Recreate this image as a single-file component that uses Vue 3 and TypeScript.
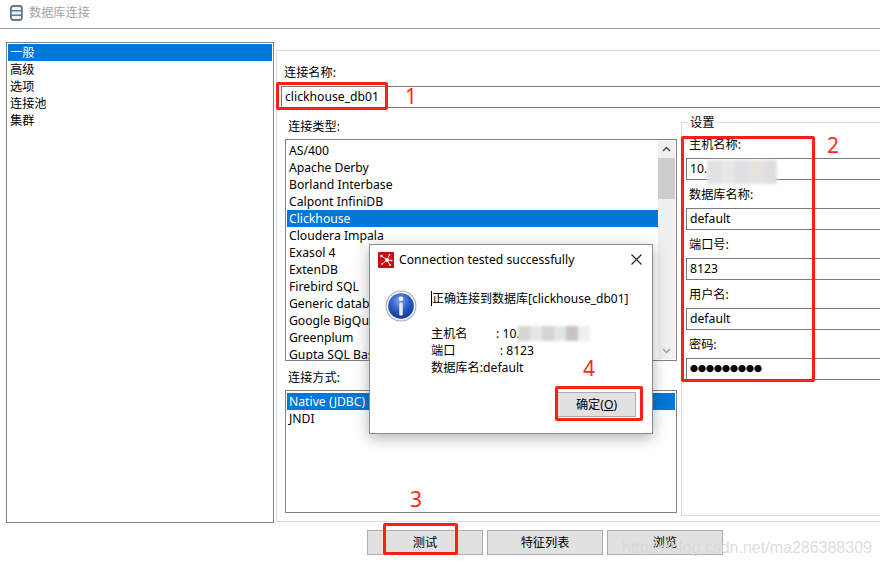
<script setup lang="ts">
const navItems = ['一般', '高级', '选项', '连接池', '集群']
const dbTypes = [
  'AS/400',
  'Apache Derby',
  'Borland Interbase',
  'Calpont InfiniDB',
  'Clickhouse',
  'Cloudera Impala',
  'Exasol 4',
  'ExtenDB',
  'Firebird SQL',
  'Generic database',
  'Google BigQuery',
  'Greenplum',
  'Gupta SQL Base',
]
const methods = ['Native (JDBC)', 'JNDI']
const fields = [
  { label: '主机名称:', value: '10.', blur: true },
  { label: '数据库名称:', value: 'default' },
  { label: '端口号:', value: '8123' },
  { label: '用户名:', value: 'default' },
  { label: '密码:', value: '●●●●●●●●●', secret: true },
]
const buttons = ['测试', '特征列表', '浏览']
const notes = [
  { n: '1', cls: 'n1' },
  { n: '2', cls: 'n2' },
  { n: '3', cls: 'n3' },
  { n: '4', cls: 'n4' },
]
const boxes = ['b1', 'b2', 'b3', 'b4']
const mosaic = ['#dfe2e3', '#e6e6e6', '#dde1e2', '#e6e3df', '#dcdfe1']
const mosaic2 = ['#d8d4d0', '#e4e6e8', '#d6d3ce', '#e2e5e7', '#c8c3bf', '#f0f0f0']
// runs of spaces line the colons up, as the dialog text does
const hostLine = '主机名         : 10.'
const portLine = '端口              : 8123'
</script>

<template>
  <div class="page">
    <header class="titlebar">
      <svg class="db-icon" width="14" height="16" viewBox="0 0 14 16">
        <rect x="1.9" y="1" width="11" height="14" rx="2.5" fill="#f4f7f9" stroke="#5b7a92" stroke-width="1.8" />
        <path d="M2 5.7h11M2 10.3h11" stroke="#5b7a92" stroke-width="1.4" fill="none" />
      </svg>
      <span class="title">数据库连接</span>
    </header>

    <main class="content">
      <ul class="nav">
        <li v-for="(item, i) in navItems" :key="item" :class="{ sel: i === 0 }">{{ item }}</li>
      </ul>

      <div class="right">
        <section class="panel">
          <label class="name-label">连接名称:</label>
          <div class="input name-input">clickhouse_db01</div>

          <div class="lower">
            <div class="lists">
              <label class="list-label">连接类型:</label>
              <div class="list types">
                <ul class="rows">
                  <li v-for="t in dbTypes" :key="t" :class="{ sel: t === 'Clickhouse' }">{{ t }}</li>
                </ul>
                <div class="scrollbar">
                  <svg width="17" height="17" viewBox="0 0 17 17"><path d="M5 10l3.5-3.5L12 10" fill="none" stroke="#505050" stroke-width="1.5" /></svg>
                  <div class="track"><div class="thumb"></div></div>
                  <svg width="17" height="17" viewBox="0 0 17 17"><path d="M5 7l3.5 3.5L12 7" fill="none" stroke="#a0a0a0" stroke-width="1.5" /></svg>
                </div>
              </div>
              <label class="list-label method-label">连接方式:</label>
              <div class="list methods">
                <ul class="rows">
                  <li v-for="m in methods" :key="m" :class="{ sel: m === methods[0] }">{{ m }}</li>
                </ul>
              </div>
            </div>

            <fieldset class="settings">
              <legend>设置</legend>
              <div v-for="f in fields" :key="f.label" class="field">
                <label>{{ f.label }}</label>
                <div class="input" :class="{ secret: f.secret }">
                  {{ f.value }}
                  <span v-if="f.blur" class="smudge">
                    <i v-for="c in mosaic" :key="c" :style="{ background: c }"></i>
                  </span>
                </div>
              </div>
            </fieldset>
          </div>
        </section>

        <div class="actions">
          <button v-for="b in buttons" :key="b" class="btn">{{ b }}</button>
        </div>
      </div>
    </main>

    <div class="dialog">
      <div class="dlg-title">
        <svg width="16" height="16" viewBox="0 0 16 16">
          <rect width="16" height="16" rx="1" fill="#cc0a10" />
          <path d="M3.5 4L9 8M11.5 2.8L9 8M13.5 8.5L9 8M4 12L9 8M12 13L9 8" stroke="#fff" stroke-width="0.9" />
          <circle cx="9" cy="8" r="1.9" fill="#fff" />
          <circle cx="3.5" cy="4" r="1.3" fill="#fff" />
          <circle cx="11.5" cy="2.8" r="0.9" fill="#fff" />
          <circle cx="13.5" cy="8.5" r="1" fill="#fff" />
          <circle cx="4" cy="12" r="0.9" fill="#fff" />
          <circle cx="12" cy="13" r="0.9" fill="#fff" />
        </svg>
        <span class="dlg-caption">Connection tested successfully</span>
        <svg class="close" width="11" height="11" viewBox="0 0 11 11">
          <path d="M.5.5l10 10M10.5.5l-10 10" stroke="#222" stroke-width="1.1" fill="none" />
        </svg>
      </div>
      <div class="dlg-body">
        <svg class="info" width="32" height="32" viewBox="0 0 32 32">
          <defs>
            <radialGradient id="orb" cx="45%" cy="30%" r="75%">
              <stop offset="0" stop-color="#7ba5f0" />
              <stop offset="0.5" stop-color="#2b5cc6" />
              <stop offset="1" stop-color="#12308c" />
            </radialGradient>
          </defs>
          <circle cx="16" cy="16" r="15.5" fill="#a6adb8" />
          <circle cx="16" cy="16" r="14.4" fill="#f1f3f6" />
          <circle cx="16" cy="16" r="12.8" fill="url(#orb)" />
          <circle cx="16" cy="8.8" r="2.3" fill="#f4f6fa" />
          <rect x="14.2" y="12.6" width="3.6" height="13" rx="1.5" fill="#e6e9ef" />
        </svg>
        <div class="dlg-text">
          <p class="headline"><span class="caret"></span>正确连接到数据库[clickhouse_db01]</p>
          <p class="line">{{ hostLine }}<span class="smudge small"><i v-for="c in mosaic2" :key="c" :style="{ background: c }"></i></span></p>
          <p class="line">{{ portLine }}</p>
          <p class="line">数据库名:default</p>
        </div>
      </div>
      <div class="dlg-foot">
        <button class="btn ok">确定(<u>O</u>)</button>
      </div>
    </div>

    <div v-for="b in boxes" :key="b" class="mark" :class="b"></div>
    <span v-for="n in notes" :key="n.n" class="note" :class="n.cls">{{ n.n }}</span>
    <span class="watermark">https://blog.csdn.net/ma286388309</span>
  </div>
</template>

<style>
html, body { margin: 0; background: #fff; }
</style>

<style scoped>
.page {
  position: relative;
  width: 880px;
  height: 566px;
  overflow: hidden;
  background: #fff;
  color: #000;
  font: 12.2px/17px "Noto Sans", "Noto Sans CJK SC", sans-serif;
}
ul { list-style: none; margin: 0; padding: 0; }
p { margin: 0; }
li { height: 17px; padding-left: 2px; white-space: nowrap; }
li.sel { background: #0078d7; color: #fff; }

.titlebar {
  display: flex;
  align-items: center;
  gap: 6px;
  box-sizing: border-box;
  height: 29px;
  padding: 0 0 3px 9px;
  border-bottom: 1px solid #a0a0a0;
}
.title { color: #a3a3a3; }

.content { display: flex; gap: 2px; padding: 13px 0 0 6px; }
.nav {
  box-sizing: border-box;
  flex: none;
  width: 268px;
  height: 481px;
  padding: 1px;
  border: 1px solid #828282;
}

.right { flex: none; width: 620px; padding-top: 8px; }
.panel {
  box-sizing: border-box;
  height: 472px;
  padding: 13px 0 0 4px;
  border: 1px solid #dcdcdc;
  border-right: 0;
}
.name-label { display: block; height: 22px; padding-left: 3px; }

.input {
  position: relative;
  box-sizing: border-box;
  height: 22px;
  padding-left: 3px;
  border: 1px solid #7a7a7a;
  line-height: 20px;
  white-space: nowrap;
}
.secret { font-size: 8px; letter-spacing: 0; }

.lower { display: flex; gap: 4px; padding: 10px 0 0 4px; }
.lists { flex: none; width: 392px; }
.list-label { display: block; height: 21px; padding-left: 3px; }
.method-label { margin-top: 8px; }
.list { box-sizing: border-box; border: 1px solid #828282; padding: 2px 1px 1px; overflow: hidden; }
.types { display: flex; height: 222px; }
.methods { height: 123px; }
.rows { flex: 1; min-width: 0; }
.scrollbar { flex: none; display: flex; flex-direction: column; width: 17px; height: 218px; margin-top: -1px; background: #f0f0f0; }
.scrollbar svg { flex: none; }
.track { flex: 1; }
.thumb { height: 41px; background: #cdcdcd; }

.settings {
  flex: none;
  box-sizing: border-box;
  width: 215px;
  height: 402px;
  margin: -4px 0 0;
  padding: 5px 0 0 4px;
  border: 1px solid #dcdcdc;
  border-right: 0;
}
.settings legend { margin-left: 2px; padding: 0 2px; }
.field { margin-bottom: 6px; }
.field label { display: block; height: 17px; margin-bottom: 5px; padding-left: 3px; }

.smudge { position: absolute; display: flex; filter: blur(1.5px); }
.smudge i { display: block; width: 14px; height: 24px; }
.field .smudge { left: 20px; top: 1px; }
.smudge.small { left: 148px; top: 81px; }
.smudge.small i { width: 12px; height: 15px; }

.actions { display: flex; gap: 4px; padding: 8px 0 0 91px; }
.btn {
  box-sizing: border-box;
  width: 116px;
  height: 25px;
  padding: 0;
  border: 1px solid #adadad;
  background: #e1e1e1;
  color: #000;
  font: inherit;
}

.dialog {
  position: absolute;
  left: 369px;
  top: 244px;
  box-sizing: border-box;
  width: 284px;
  height: 190px;
  border: 1px solid #8a8a8a;
  background: #fff;
  box-shadow: 0 4px 14px rgba(0, 0, 0, 0.3);
}
.dlg-title { display: flex; align-items: center; height: 29px; padding: 0 9px 0 8px; }
.dlg-caption { flex: 1; padding-left: 5px; }
.close { margin-right: 1px; }
.dlg-body { display: flex; padding: 16px 0 0 15px; }
.info { flex: none; }
.dlg-text { padding-left: 14px; }
.headline { display: flex; height: 18px; margin-bottom: 17px; font-size: 12px; white-space: nowrap; }
.caret { width: 1px; height: 15px; background: #000; margin-top: 1px; }
.line { height: 17px; white-space: pre; }
.dlg-foot { position: absolute; right: 16px; bottom: 16px; }
.ok { display: block; width: 79px; }

.mark {
  position: absolute;
  box-sizing: border-box;
  border: 3px solid #ff1e12;
  border-radius: 2px;
}
.b1 { left: 276px; top: 82px; width: 112px; height: 28px; }
.b2 { left: 681px; top: 136px; width: 134px; height: 246px; }
.b3 { left: 383px; top: 523px; width: 75px; height: 32px; }
.b4 { left: 555px; top: 386px; width: 88px; height: 35px; }

.note { position: absolute; color: #ff2a18; font-size: 21px; line-height: 24px; }
.n1 { left: 405px; top: 84px; }
.n2 { left: 827px; top: 133px; }
.n3 { left: 410px; top: 487px; }
.n4 { left: 583px; top: 356px; }

.watermark {
  position: absolute;
  left: 622px;
  top: 538px;
  color: rgba(215, 215, 215, 0.85);
  font: 16px/20px "Liberation Sans", sans-serif;
  white-space: nowrap;
}
</style>
